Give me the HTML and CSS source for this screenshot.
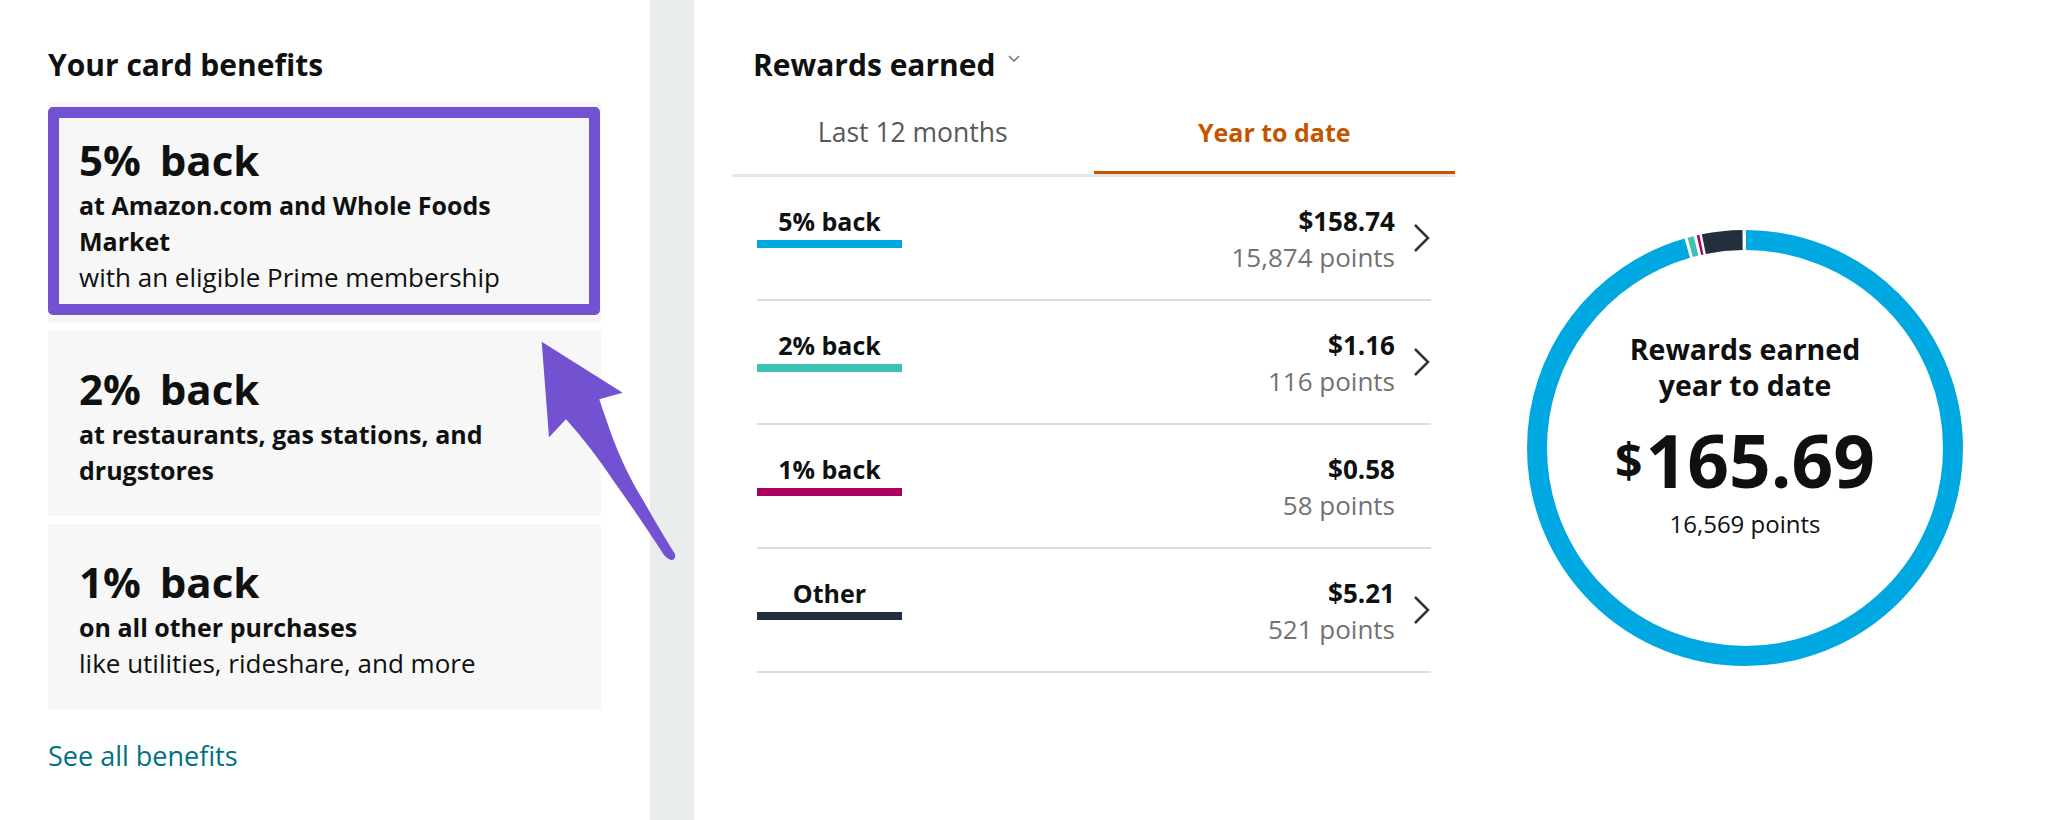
FILE: index.html
```html
<!DOCTYPE html>
<html lang="en">
<head>
<meta charset="utf-8">
<title>Card rewards</title>
<link rel="stylesheet" href="styles.css">
</head>
<body>
<div class="page">
  <section class="benefits">
    <h2 class="heading">Your card benefits</h2>
    <div class="card">
      <div class="card-rate">5% back</div>
      <div class="card-text">
        <div class="card-line">at Amazon.com and Whole Foods Market</div>
        <div class="card-note">with an eligible Prime membership</div>
      </div>
      <div class="highlight"></div>
    </div>
    <div class="card">
      <div class="card-rate">2% back</div>
      <div class="card-text">
        <div class="card-line">at restaurants, gas stations, and drugstores</div>
      </div>
    </div>
    <div class="card">
      <div class="card-rate">1% back</div>
      <div class="card-text">
        <div class="card-line">on all other purchases</div>
        <div class="card-note">like utilities, rideshare, and more</div>
      </div>
    </div>
    <a class="see-all" href="#">See all benefits</a>
  </section>

  <div class="divider"></div>

  <section class="rewards">
    <div class="rewards-main">
      <h2 class="heading heading-indent">Rewards earned<svg class="caret" width="12" height="7" viewBox="0 0 12 7"><polyline points="1,1 6,6 11,1" fill="none" stroke="#6f7373" stroke-width="1.5"/></svg></h2>
      <div class="tabs">
        <div class="tab">Last 12 months</div>
        <div class="tab active">Year to date</div>
      </div>
      <div class="rows">
        <div class="row">
          <div class="row-label"><div class="label-text">5% back</div><div class="bar bar-blue"></div></div>
          <div class="row-amounts"><div class="amount">$158.74</div><div class="points">15,874 points</div></div>
          <div class="chev-slot"><svg class="chev" width="17" height="30" viewBox="0 0 17 30"><polyline points="2,2 15,15 2,28" fill="none" stroke="#333" stroke-width="2.5"/></svg></div>
        </div>
        <div class="row">
          <div class="row-label"><div class="label-text">2% back</div><div class="bar bar-teal"></div></div>
          <div class="row-amounts"><div class="amount">$1.16</div><div class="points">116 points</div></div>
          <div class="chev-slot"><svg class="chev" width="17" height="30" viewBox="0 0 17 30"><polyline points="2,2 15,15 2,28" fill="none" stroke="#333" stroke-width="2.5"/></svg></div>
        </div>
        <div class="row">
          <div class="row-label"><div class="label-text">1% back</div><div class="bar bar-magenta"></div></div>
          <div class="row-amounts"><div class="amount">$0.58</div><div class="points">58 points</div></div>
          <div class="chev-slot"></div>
        </div>
        <div class="row">
          <div class="row-label"><div class="label-text">Other</div><div class="bar bar-navy"></div></div>
          <div class="row-amounts"><div class="amount">$5.21</div><div class="points">521 points</div></div>
          <div class="chev-slot"><svg class="chev" width="17" height="30" viewBox="0 0 17 30"><polyline points="2,2 15,15 2,28" fill="none" stroke="#333" stroke-width="2.5"/></svg></div>
        </div>
      </div>
    </div>

    <div class="donut">
      <svg class="donut-ring" width="436" height="436" viewBox="0 0 436 436">
        <g transform="rotate(-90 218 218)" fill="none" stroke-width="20">
          <circle cx="218" cy="218" r="208" stroke="#00a8e1" stroke-dasharray="1246.9 60" stroke-dashoffset="-1"/>
          <circle cx="218" cy="218" r="208" stroke="#3cc2b4" stroke-dasharray="6 1300.9" stroke-dashoffset="-1250.9"/>
          <circle cx="218" cy="218" r="208" stroke="#ad0063" stroke-dasharray="2.5 1304.4" stroke-dashoffset="-1259.9"/>
          <circle cx="218" cy="218" r="208" stroke="#232f3e" stroke-dasharray="39 1267.9" stroke-dashoffset="-1264.9"/>
        </g>
      </svg>
      <div class="donut-center">
        <div class="donut-title">Rewards earned<br>year to date</div>
        <div class="donut-total"><span class="dollar">$</span>165.69</div>
        <div class="donut-points">16,569 points</div>
      </div>
    </div>
  </section>

  <svg class="arrow" width="180" height="260" viewBox="0 0 180 260">
    <path d="M21.7 21.7 L102.7 72.7 L79.3 79.3 Q82 88 85 96 Q101 145 123 180 Q141 212 155 234 Q156 240 151 240 Q147 239 144 235 Q118 195 95 163 Q71 127 46 99.3 L29 117.3 Z" fill="#7352d1"/>
  </svg>
</div>
</body>
</html>
```
FILE: styles.css
```css
html, body {
  margin: 0;
  padding: 0;
}

body {
  width: 2048px;
  height: 820px;
  overflow: hidden;
  background: #ffffff;
  color: #0f1111;
  font-family: "Open Sans", "Liberation Sans", sans-serif;
}

.page {
  position: relative;
  display: flex;
  height: 820px;
}

/* ---------- left column ---------- */
.benefits {
  width: 650px;
  box-sizing: border-box;
  padding: 45px 49px 0 48px;
}

.heading {
  margin: 0 0 17px;
  font-size: 30px;
  line-height: 40px;
  font-weight: 700;
}

.card {
  position: relative;
  background: #f7f7f7;
  padding: 35px 20px 28px 31px;
}

.card + .card {
  margin-top: 8px;
}

.card-rate {
  font-size: 42px;
  line-height: 46px;
  font-weight: 700;
  word-spacing: 8px;
}

.card-text {
  max-width: 470px;
  margin-top: 4px;
}

.card-line {
  font-size: 25px;
  line-height: 36px;
  font-weight: 700;
}

.card-note {
  font-size: 26px;
  line-height: 36px;
}

.highlight {
  position: absolute;
  top: 5px;
  left: 0;
  right: 1px;
  bottom: 8px;
  border: 11.5px solid #7352d1;
  border-radius: 5px;
}

.see-all {
  display: block;
  margin-top: 31px;
  font-size: 27px;
  line-height: 32px;
  color: #007185;
  text-decoration: none;
}

/* ---------- divider ---------- */
.divider {
  width: 44px;
  background: #eaeded;
}

/* ---------- right column ---------- */
.rewards {
  flex: 1;
  display: flex;
  padding-left: 38px;
}

.rewards-main {
  width: 723px;
  padding-top: 45px;
}

.heading-indent {
  margin-left: 21px;
  margin-bottom: 15px;
}

.caret {
  margin-left: 12px;
  vertical-align: 14px;
}

.tabs {
  display: flex;
  border-bottom: 3px solid #e7e7e7;
}

.tab {
  flex: 1;
  text-align: center;
  font-size: 26.5px;
  line-height: 32px;
  padding: 16px 0 26px;
  color: #565959;
}

.tab.active {
  font-size: 25px;
  color: #c45500;
  font-weight: 700;
  box-shadow: inset 0 -3px 0 #c45500;
}

.rows {
  margin: 0 24px 0 25px;
}

.row {
  display: flex;
  align-items: flex-start;
  height: 122px;
  border-bottom: 2px solid #dddddd;
}

.row-label {
  width: 145px;
  margin-top: 29px;
  text-align: center;
}

.label-text {
  font-size: 25px;
  line-height: 30px;
  font-weight: 700;
}

.bar {
  height: 8px;
  margin-top: 4px;
}

.bar-blue { background: #00a8e1; }
.bar-teal { background: #3cc2b4; }
.bar-magenta { background: #ad0063; }
.bar-navy { background: #232f3e; }

.row-amounts {
  margin-left: auto;
  margin-top: 26px;
  text-align: right;
}

.amount {
  font-size: 26px;
  line-height: 36px;
  font-weight: 700;
}

.points {
  font-size: 26px;
  line-height: 36px;
  color: #6f7373;
}

.chev-slot {
  width: 36px;
  margin-top: 46px;
  display: flex;
  justify-content: flex-end;
  padding-right: 1px;
  box-sizing: border-box;
}

/* ---------- donut ---------- */
.donut {
  display: grid;
  width: 436px;
  height: 436px;
  margin-left: 72px;
  margin-top: 230px;
}

.donut-ring,
.donut-center {
  grid-area: 1 / 1;
}

.donut-center {
  text-align: center;
  padding-top: 101px;
}

.donut-title {
  font-size: 28.5px;
  line-height: 36px;
  font-weight: 700;
}

.donut-total {
  margin-top: 21px;
  font-size: 73px;
  line-height: 72px;
  font-weight: 700;
}

.dollar {
  font-size: 48px;
  line-height: 40px;
  vertical-align: 10px;
  margin-right: 3px;
}

.donut-points {
  margin-top: 14px;
  font-size: 24px;
  line-height: 28px;
}

/* ---------- annotation arrow ---------- */
.arrow {
  position: absolute;
  left: 520px;
  top: 320px;
}
```
